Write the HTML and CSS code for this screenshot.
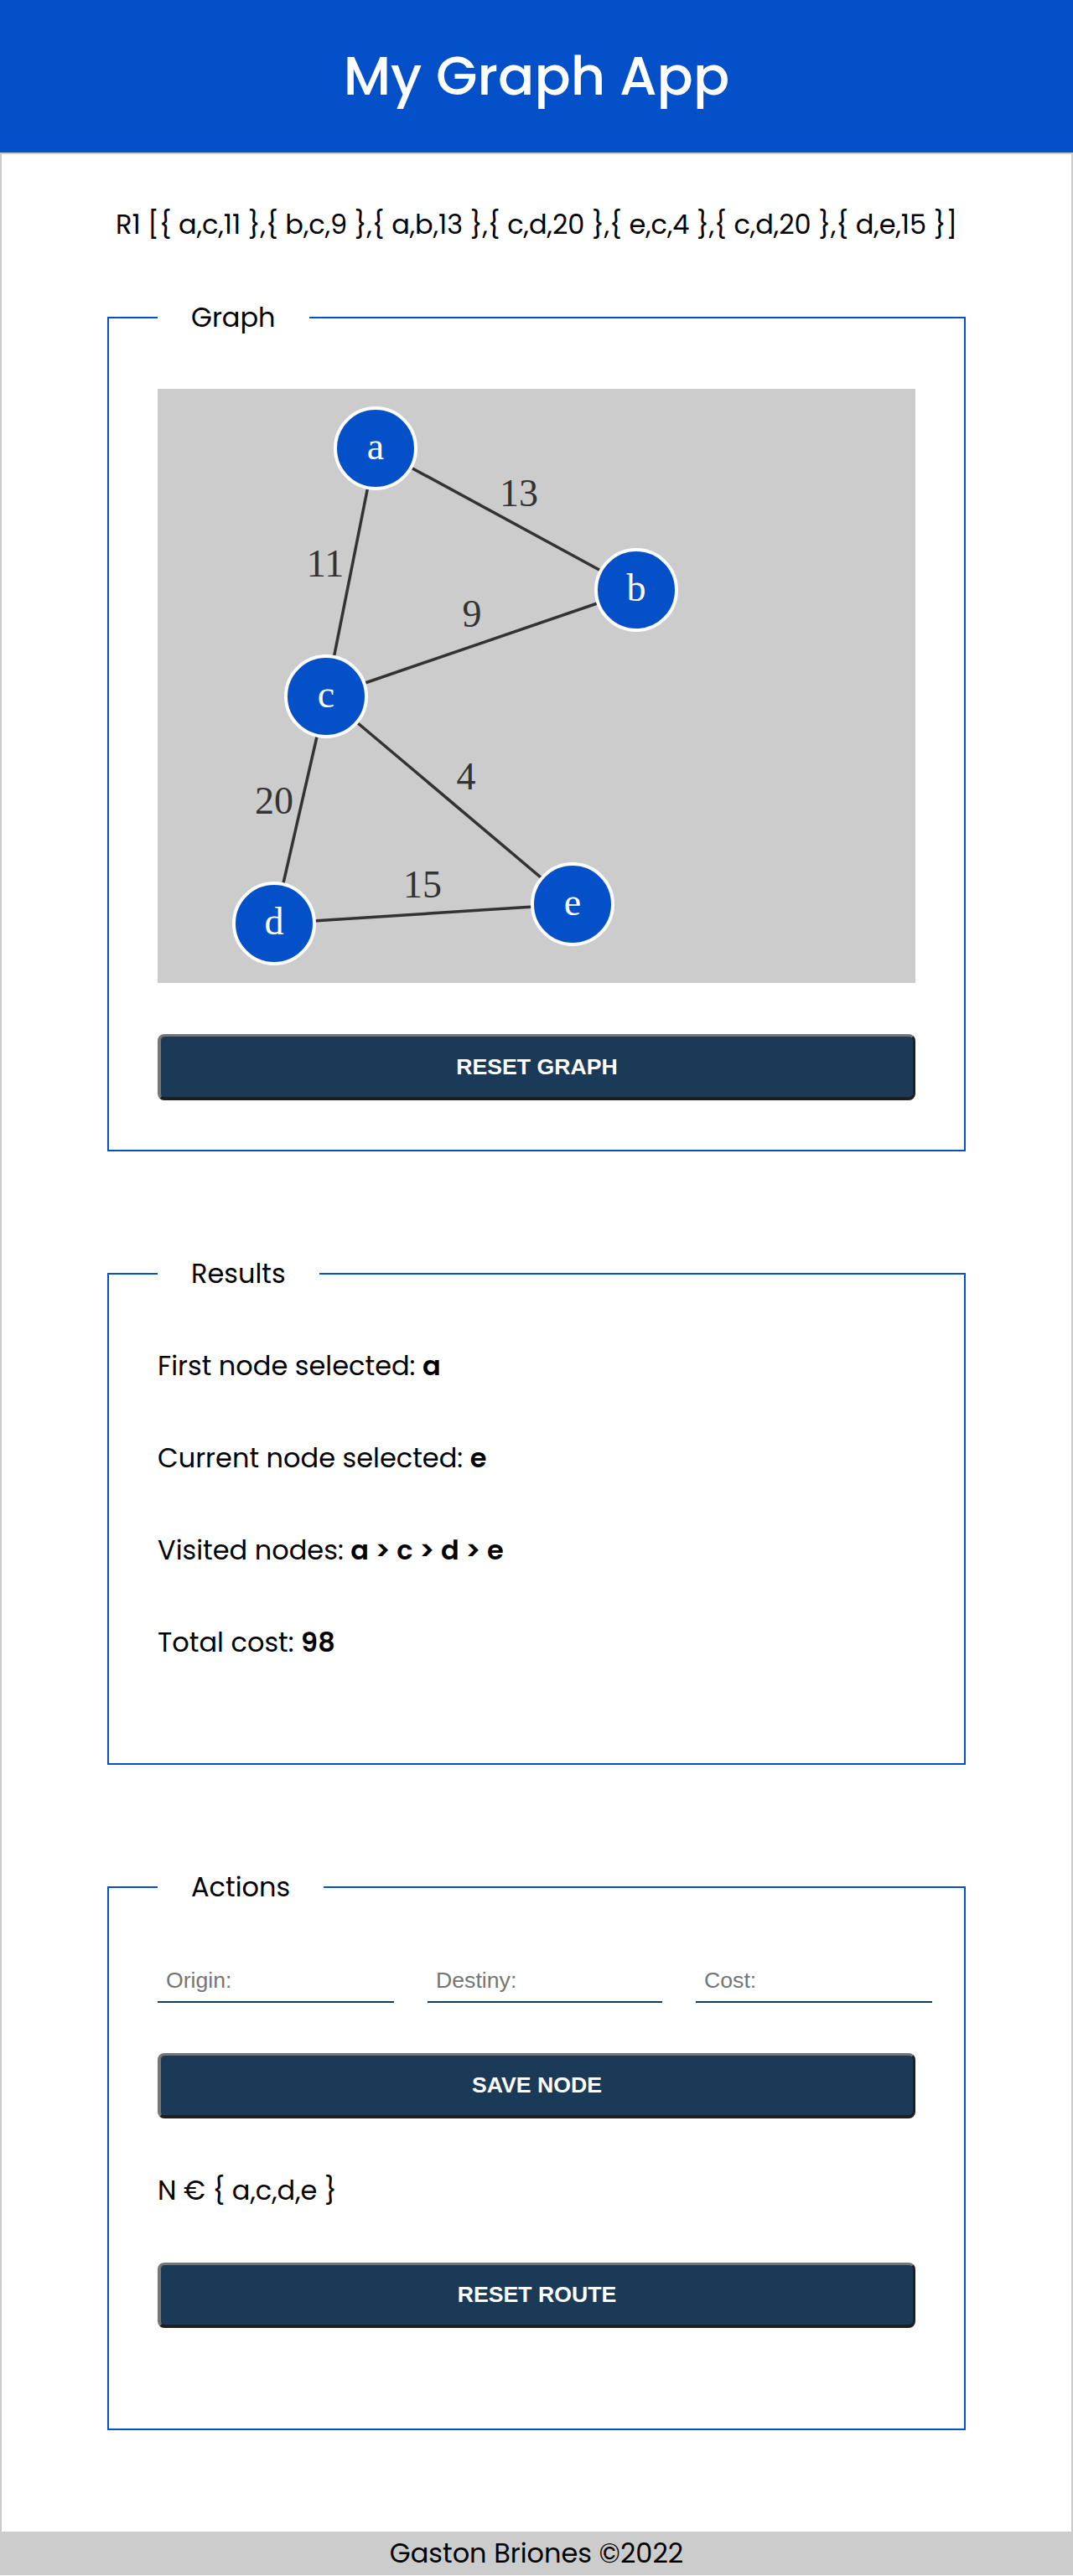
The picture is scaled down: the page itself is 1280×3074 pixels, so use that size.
FILE: index.html
```html
<!DOCTYPE html>
<html lang="en">
<head>
<meta charset="utf-8">
<title>My Graph App</title>
<link rel="stylesheet" href="styles.css">
</head>
<body>
<header class="app-header">
  <h1 class="app-title">My Graph App</h1>
</header>
<main class="app-main">
  <p class="route">R1 [{ a,c,11 },{ b,c,9 },{ a,b,13 },{ c,d,20 },{ e,c,4 },{ c,d,20 },{ d,e,15 }]</p>

  <fieldset class="panel panel-graph">
    <legend class="panel-legend">Graph</legend>
    <div class="graph-canvas">
      <svg class="graph-svg" width="904" height="709" viewBox="0 0 904 709" xmlns="http://www.w3.org/2000/svg">
        <g class="edges" stroke="#333333" stroke-width="3.5">
          <line x1="260" y1="71" x2="201" y2="367"/>
          <line x1="571" y1="240" x2="201" y2="367"/>
          <line x1="260" y1="71" x2="571" y2="240"/>
          <line x1="201" y1="367" x2="139" y2="638"/>
          <line x1="495" y1="615" x2="201" y2="367"/>
          <line x1="139" y1="638" x2="495" y2="615"/>
        </g>
        <g class="edge-labels" fill="#333333" font-family="'Liberation Serif', 'Times New Roman', serif" font-size="46" text-anchor="middle">
          <text x="431" y="140">13</text>
          <text x="200" y="224">11</text>
          <text x="375" y="284">9</text>
          <text x="139" y="507">20</text>
          <text x="368" y="478">4</text>
          <text x="316" y="607">15</text>
        </g>
        <g class="nodes" fill="#0450c8" stroke="#ffffff" stroke-width="4">
          <circle cx="260" cy="71" r="48"/>
          <circle cx="571" cy="240" r="48"/>
          <circle cx="201" cy="367" r="48"/>
          <circle cx="139" cy="638" r="48"/>
          <circle cx="495" cy="615" r="48"/>
        </g>
        <g class="node-labels" fill="#ffffff" font-family="'Liberation Serif', 'Times New Roman', serif" font-size="46" text-anchor="middle">
          <text x="260" y="84">a</text>
          <text x="571" y="253">b</text>
          <text x="201" y="380">c</text>
          <text x="139" y="651">d</text>
          <text x="495" y="628">e</text>
        </g>
      </svg>
    </div>
    <button class="btn btn-graph" type="button">RESET GRAPH</button>
  </fieldset>

  <fieldset class="panel panel-results">
    <legend class="panel-legend">Results</legend>
    <p class="result-line">First node selected: <strong>a</strong></p>
    <p class="result-line">Current node selected: <strong>e</strong></p>
    <p class="result-line">Visited nodes: <strong>a &gt; c &gt; d &gt; e</strong></p>
    <p class="result-line">Total cost: <strong>98</strong></p>
  </fieldset>

  <fieldset class="panel panel-actions">
    <legend class="panel-legend">Actions</legend>
    <div class="inputs-row">
      <input class="field" type="text" placeholder="Origin:">
      <input class="field field-mid" type="text" placeholder="Destiny:">
      <input class="field" type="text" placeholder="Cost:">
    </div>
    <button class="btn btn-save" type="button">SAVE NODE</button>
    <p class="node-set">N € { a,c,d,e }</p>
    <button class="btn btn-reset" type="button">RESET ROUTE</button>
  </fieldset>
</main>
<footer class="app-footer">Gaston Briones ©2022</footer>
</body>
</html>
```

FILE: styles.css
```css
* {
  box-sizing: border-box;
}

html, body {
  margin: 0;
  padding: 0;
}

body {
  background: #ffffff;
  color: #000000;
  font-family: "Poppins", "Inter", "Noto Sans", sans-serif;
  font-size: 32px;
}

.app-header {
  height: 182px;
  background: #0450c8;
  display: flex;
  align-items: center;
  justify-content: center;
}

.app-title {
  margin: 0;
  color: #ffffff;
  font-size: 64px;
  font-weight: 500;
  line-height: 80px;
}

.app-main {
  border: 2px solid #cccccc;
  border-bottom: none;
  padding: 64px 0 121px;
}

.route {
  margin: 0 0 71px;
  text-align: center;
  line-height: 40px;
  font-size: 32px;
}

.panel {
  width: 1024px;
  margin: 0 auto;
  border: 2px solid #0450c8;
  padding: 0 58px;
  min-inline-size: 0;
}

.panel + .panel {
  margin-top: 126px;
}

.panel-legend {
  padding: 0 40px;
  margin: 0;
  font-size: 32px;
  line-height: 40px;
}

.panel-graph {
  padding-top: 65px;
  padding-bottom: 59px;
}

.graph-canvas {
  width: 904px;
  height: 709px;
  background: #cccccc;
}

.graph-svg {
  display: block;
}

.btn {
  display: block;
  width: 904px;
  height: 79px;
  margin: 0;
  padding: 0;
  background: #1b3a57;
  color: #ffffff;
  font-family: "Liberation Sans", Arial, sans-serif;
  font-size: 26.67px;
  font-weight: 700;
  border-style: solid;
  border-width: 3px 3px 4px 4px;
  border-color: #767676 #1f1f1f #1f1f1f #767676;
  border-radius: 8px;
}

.btn-graph {
  margin-top: 61px;
}

.panel-results {
  padding-top: 70px;
  padding-bottom: 124px;
}

.result-line {
  margin: 0 0 70px;
  line-height: 40px;
}

.result-line:last-child {
  margin-bottom: 0;
}

.result-line strong {
  font-weight: 600;
}

.panel-actions {
  padding-top: 66px;
  padding-bottom: 120px;
}

.inputs-row {
  display: flex;
  gap: 40px;
}

.field {
  flex: 0 0 282px;
  width: 282px;
  height: 52px;
  padding: 0 10px;
  border: none;
  border-bottom: 2px solid #1b3a57;
  background: transparent;
  font-family: "Liberation Sans", Arial, sans-serif;
  font-size: 26.67px;
  color: #000000;
  outline: none;
}

.field-mid {
  flex-basis: 280px;
  width: 280px;
}

.field::placeholder {
  color: #757575;
}

.btn-save {
  margin-top: 60px;
  height: 78px;
}

.node-set {
  margin: 66px 0 0;
  line-height: 40px;
}

.btn-reset {
  margin-top: 66px;
  height: 78px;
}

.app-footer {
  height: 52px;
  background: #cccccc;
  display: flex;
  align-items: center;
  justify-content: center;
  font-size: 32px;
  line-height: 40px;
}
```
